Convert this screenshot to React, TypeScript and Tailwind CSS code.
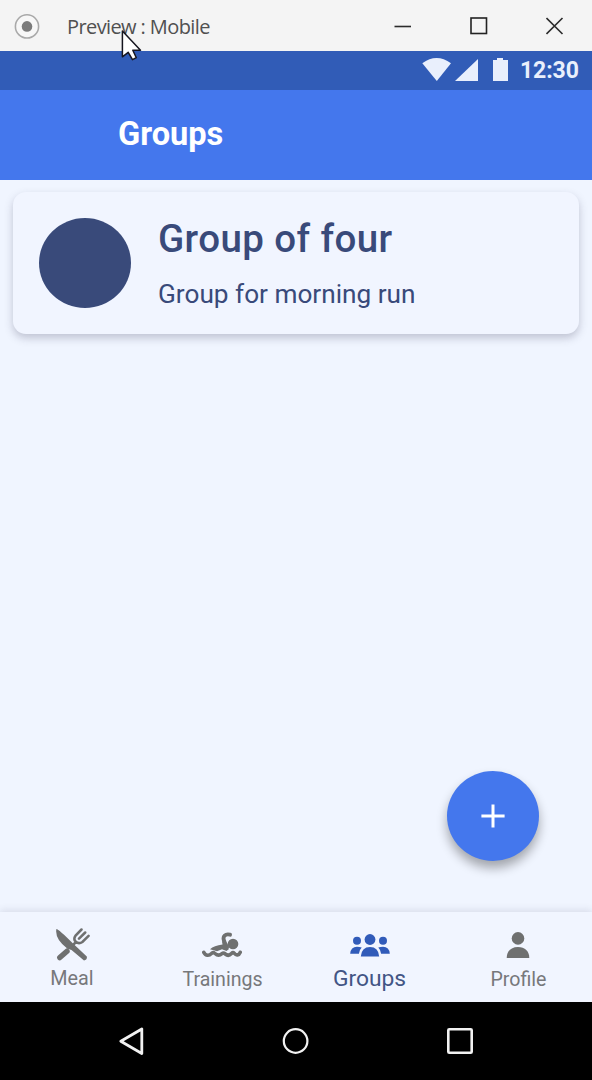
import type { ReactNode } from "react";

const roboto = "font-['Roboto','Liberation_Sans',sans-serif]";

function TitleBar() {
  return (
    <header className="relative flex h-[51px] shrink-0 items-center bg-[#f4f4f4] pl-[14px]">
      <svg width="26" height="26" viewBox="0 0 26 26" aria-hidden="true">
        <circle cx="13" cy="13.4" r="11.6" fill="#f7f7f7" stroke="#a9a9a9" strokeWidth="1.6" />
        <circle cx="13" cy="13.4" r="5.3" fill="#7b7b7b" />
      </svg>
      <span className="ml-[27px] whitespace-nowrap pt-[2px] font-['Open_Sans','Noto_Sans',sans-serif] text-[20px] leading-[26px] tracking-[-0.6px] text-[#505050]">
        Preview : Mobile
      </span>
      <div className="ml-auto flex items-center gap-[58px] pr-[28px]">
        <svg width="18" height="18" viewBox="0 0 18 18" aria-hidden="true">
          <path d="M0.5 9.5H17" stroke="#2b2b2b" strokeWidth="1.6" />
        </svg>
        <svg width="18" height="18" viewBox="0 0 18 18" aria-hidden="true">
          <rect x="1" y="1" width="15.5" height="15.5" fill="none" stroke="#222" strokeWidth="1.6" />
        </svg>
        <svg width="18" height="18" viewBox="0 0 18 18" aria-hidden="true">
          <path d="M0.5 1L16.5 17M16.5 1L0.5 17" stroke="#2b2b2b" strokeWidth="1.6" />
        </svg>
      </div>
      <svg className="absolute left-[120px] top-[29px] z-10" width="24" height="34" viewBox="0 0 24 34" aria-hidden="true">
        <path
          d="M2.4 2V27.8L8.2 23.3L12.5 30.7L16.3 28.7L12.8 21.3H20.5Z"
          fill="#fff"
          stroke="#15151f"
          strokeWidth="1.5"
          strokeLinejoin="round"
        />
      </svg>
    </header>
  );
}

function StatusBar() {
  return (
    <div className="flex h-[39px] shrink-0 items-center bg-[#315cb7] pl-[422px] text-[#e9effc]">
      <svg width="90" height="39" viewBox="0 0 90 39" fill="currentColor" aria-hidden="true">
        <path d="M0.3 12.2Q14.5 1.8 29 12.2L14.8 30Z" />
        <path d="M56 8V30H33Z" />
        <path d="M71 9H75V7H81V9H86V30H71Z" />
      </svg>
      <span className={`${roboto} ml-[8px] pt-[1px] text-[23px] font-bold leading-[38px] tracking-[-0.1px]`}>12:30</span>
    </div>
  );
}

function GroupCard() {
  return (
    <article className="flex h-[142px] items-center rounded-[13px] bg-[#f1f5ff] pl-[26px] shadow-[0_4px_8px_rgba(60,60,90,0.27)]">
      <div className="h-[90px] w-[92px] shrink-0 rounded-[50%] bg-[#394a7a]" />
      <div className={`${roboto} ml-[27px] whitespace-nowrap pt-[3px] text-[#394a7a]`}>
        <h2 className="text-[38.5px] font-medium leading-[50px] tracking-[0.4px]">Group of four</h2>
        <p className="mt-[9px] text-[26.2px] leading-[42px]">Group for morning run</p>
      </div>
    </article>
  );
}

function MealIcon() {
  return (
    <svg className="mr-[3px]" width="36" height="34" viewBox="0 0 36 34" fill="none" stroke="#6f7070" aria-hidden="true">
      <path d="M1.4 1Q3 0.5 18 15.5L31.8 28.5Q32.5 32 29 32.5L16.5 22L12.5 20.8Q-0.5 11 1.4 1Z" fill="#6f7070" stroke="none" />
      <path d="M4.8 29.6L12 23.2" strokeWidth="5.4" strokeLinecap="round" />
      <path
        d="M26.5 1.5L20.6 7.5Q18 11.3 20.8 13.8Q23.8 16.4 27.4 14L33.6 7.8M30.2 4.5L24 10.7M21 14L18 17"
        strokeWidth="2.5"
        strokeLinecap="round"
      />
    </svg>
  );
}

function SwimIcon() {
  return (
    <svg width="40" height="27" viewBox="0 0 40 27" fill="none" aria-hidden="true">
      <circle cx="31" cy="12" r="5.3" fill="#6f7070" />
      <path d="M28 2.7C23 1.5 20.8 4.5 21.8 8Q22.5 11 25 15" stroke="#6f7070" strokeWidth="3.9" strokeLinecap="round" />
      <path d="M20 8.5L27 17L24.5 19L20 17.3L15 19.2L8 17.2Q12 13.7 20.5 12.5Z" fill="#6f7070" />
      <path
        d="M1.8 20.3C3.8 24 7 24 9.5 21.5Q11 19.8 13 21.5Q16.5 24.7 20 21.7Q21.5 20.5 23.3 22Q26.5 24.7 29.5 21.5Q31 20 32.5 21.5C34 23.5 37 23.5 38.2 20.3"
        stroke="#6f7070"
        strokeWidth="3.6"
        strokeLinecap="round"
      />
    </svg>
  );
}

function GroupsIcon() {
  return (
    <svg className="mr-[1px]" width="40" height="23" viewBox="0 0 40 23" fill="#315bb9" aria-hidden="true">
      <circle cx="20" cy="5.5" r="5.4" />
      <circle cx="7" cy="6.7" r="4" />
      <circle cx="33" cy="6.7" r="4" />
      <path d="M10.8 22.5Q11.5 13 20 13T29.2 22.5Z" />
      <path d="M0.2 19.7Q0.8 12.8 7 12.8Q9.5 12.8 11.7 13.4Q9.2 15.9 8.9 19.7Z" />
      <path d="M39.8 19.7Q39.2 12.8 33 12.8Q30.5 12.8 28.3 13.4Q30.8 15.9 31.1 19.7Z" />
    </svg>
  );
}

function ProfileIcon() {
  return (
    <svg width="24" height="27" viewBox="0 0 24 27" fill="#6f7070" aria-hidden="true">
      <circle cx="12" cy="6.4" r="6.3" />
      <path d="M0.7 26C0.7 19.5 5 15.1 12 15.1S23.3 19.5 23.3 26Z" />
    </svg>
  );
}

function Tab({ icon, label, labelClass }: { icon: ReactNode; label: string; labelClass: string }) {
  return (
    <button type="button" className="flex h-full flex-col items-center">
      <span className="flex h-[66px] items-center">{icon}</span>
      <span className={`${roboto} -mt-[11px] ${labelClass}`}>{label}</span>
    </button>
  );
}

function SystemBar() {
  return (
    <footer className="flex h-[78px] shrink-0 items-center justify-between bg-black pl-[117px] pr-[118px]">
      <svg width="28" height="30" viewBox="0 0 28 30" fill="none" aria-hidden="true">
        <path d="M24.8 3V27.5L3.8 15.2Z" stroke="#f2f2f2" strokeWidth="2.8" strokeLinejoin="round" />
      </svg>
      <svg width="28" height="28" viewBox="0 0 28 28" fill="none" aria-hidden="true">
        <circle cx="13.6" cy="14" r="11.8" stroke="#f2f2f2" strokeWidth="2.2" />
      </svg>
      <svg width="28" height="28" viewBox="0 0 28 28" fill="none" aria-hidden="true">
        <rect x="2.3" y="2.3" width="23.4" height="23.4" rx="1" stroke="#f2f2f2" strokeWidth="2.6" />
      </svg>
    </footer>
  );
}

export default function App() {
  return (
    <div className="flex h-[1080px] w-[592px] flex-col overflow-hidden bg-[#f0f5ff]">
      <TitleBar />
      <StatusBar />
      <div className="flex h-[90px] shrink-0 items-center bg-[#4477ed] pl-[118px]">
        <h1 className={`${roboto} pb-[2px] text-[32.6px] font-bold leading-[40px] text-white`}>Groups</h1>
      </div>
      <main className="flex flex-1 flex-col px-[13px] pt-[12px]">
        <GroupCard />
        <button
          type="button"
          aria-label="Add group"
          className="mb-[51px] mr-[40px] mt-auto flex h-[90px] w-[92px] items-center justify-center self-end rounded-[50%] bg-[#4477ed] shadow-[0_7px_11px_rgba(0,0,0,0.33)]"
        >
          <svg width="24" height="24" viewBox="0 0 24 24" aria-hidden="true">
            <path d="M12 0.4V23.6M0.4 12H23.6" stroke="#fff" strokeWidth="3" />
          </svg>
        </button>
      </main>
      <nav className="grid h-[90px] shrink-0 grid-cols-4 bg-[#f1f5ff] shadow-[0_-2px_7px_rgba(60,60,90,0.13)]">
        <Tab icon={<MealIcon />} label="Meal" labelClass="pr-[4px] text-[19.8px] leading-[24px] text-[#77787b]" />
        <Tab icon={<SwimIcon />} label="Trainings" labelClass="pl-[1px] text-[19.6px] leading-[26px] text-[#77787b]" />
        <Tab icon={<GroupsIcon />} label="Groups" labelClass="pr-[1px] text-[22.8px] leading-[24px] text-[#435585]" />
        <Tab icon={<ProfileIcon />} label="Profile" labelClass="pl-[1px] text-[19.6px] leading-[26px] text-[#77787b]" />
      </nav>
      <SystemBar />
    </div>
  );
}
